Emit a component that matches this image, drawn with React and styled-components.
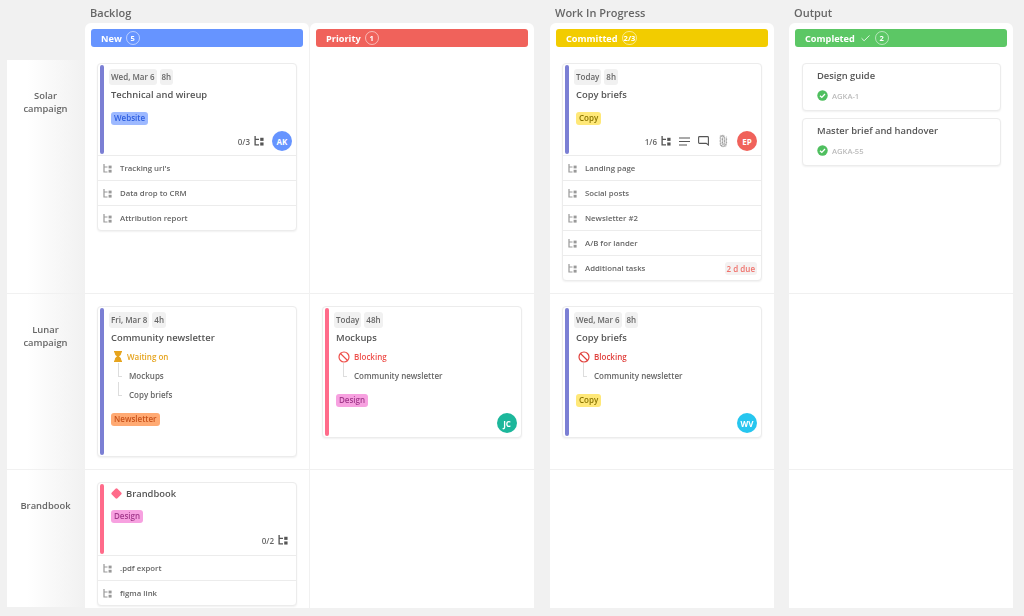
import React from 'react'
import styled, { createGlobalStyle } from 'styled-components'
import { Ban, Check, Paperclip } from 'lucide-react'

const GlobalStyle = createGlobalStyle`
    html, body {
        margin: 0;
        padding: 0;
        background: #f1f1f1;
    }
    body {
        font-family: "Open Sans", "Noto Sans", sans-serif;
        color: #555;
    }
`

const Board = styled.div`
    display: grid;
    grid-template-columns: 78px 225px 224px 16px 224px 15px 224px;
    grid-template-rows: 23px 37px 234px 176px 138px;
    padding-left: 7px;
    width: 1017px;
    height: 616px;
    box-sizing: border-box;
    filter: blur(0.3px);
`

const GroupTitle = styled.div`
    grid-row: 1;
    grid-column: ${(props) => props.$col};
    padding-left: 5px;
    font-size: 11px;
    font-weight: 600;
    line-height: 26px;
    color: #666;
    white-space: nowrap;
`

const HeaderCell = styled.div`
    grid-row: 2;
    grid-column: ${(props) => props.$col};
    background: #fff;
    border-radius: 6px 6px 0 0;
    padding: 6px 6px 0;
    ${(props) => props.$divider && 'border-right: 1px solid #f1f1f1;'}
`

const HeaderBar = styled.div`
    display: flex;
    align-items: center;
    height: 18px;
    padding-left: 10px;
    border-radius: 3px;
    background: ${(props) => props.$color};
    color: #fff;
    font-size: 9.2px;
    font-weight: 700;
`

const CountBadge = styled.span`
    display: inline-flex;
    align-items: center;
    justify-content: center;
    min-width: 10px;
    height: 12px;
    padding: 0 1px;
    margin-left: 4px;
    border: 1px solid rgba(255, 255, 255, 0.55);
    border-radius: 7px;
    font-size: 7.5px;
    font-weight: 700;
`

const RowLabel = styled.div`
    grid-row: ${(props) => props.$row};
    grid-column: 1;
    background: linear-gradient(90deg, #fff 25%, #f1f1f1 100%);
    border-bottom: 1px solid #f1f1f1;
    padding-top: ${(props) => props.$top}px;
    padding-right: 1px;
    text-align: center;
    font-size: 9.4px;
    font-weight: 600;
    line-height: 13px;
    color: #666;
    box-sizing: border-box;
`

const Cell = styled.div`
    grid-row: ${(props) => props.$row};
    grid-column: ${(props) => props.$col};
    background: #fff;
    padding: ${(props) => props.$top}px 0 0 ${(props) => props.$left || 12}px;
    box-sizing: border-box;
    border-bottom: ${(props) => (props.$row === 5 ? 0 : '1px solid #f0f0f0')};
    ${(props) => props.$divider && 'border-right: 1px solid #f1f1f1;'}
`

const Card = styled.div`
    width: ${(props) => props.$width || 200}px;
    box-sizing: border-box;
    background: #fff;
    border: 1px solid #ececec;
    border-radius: 4px;
    box-shadow: 0 1px 2px rgba(0, 0, 0, 0.06);
    margin-bottom: 7px;
`

const Main = styled.div`
    display: flex;
    min-height: ${(props) => props.$height}px;
    box-sizing: border-box;
    padding: 1px 4px 1px 2px;
`

const Bar = styled.div`
    flex: none;
    width: 4px;
    border-radius: 2px;
    background: ${(props) => props.$color};
`

const Body = styled.div`
    flex: 1;
    display: flex;
    flex-direction: column;
    padding: ${(props) => props.$top ?? 4}px 0 0 5px;
`

const Chips = styled.div`
    display: flex;
    gap: 3px;
`

const Chip = styled.span`
    height: 16px;
    line-height: 15px;
    padding: 0 2px;
    border-radius: 3px;
    background: #f1f1f1;
    color: #666;
    font-size: 8px;
    font-weight: 600;
    white-space: nowrap;
`

const Title = styled.div`
    display: flex;
    align-items: center;
    gap: 4px;
    height: 19px;
    padding-left: 2px;
    font-size: 9.4px;
    font-weight: 600;
    color: #555;
    white-space: nowrap;
`

const Tag = styled.span`
    align-self: flex-start;
    height: 13px;
    line-height: 12px;
    margin: ${(props) => props.$top || 9}px 0 0 2px;
    padding: 0 3px;
    border-radius: 3px;
    background: ${(props) => props.$bg};
    color: ${(props) => props.$color};
    font-size: 8px;
    font-weight: 600;
`

const Footer = styled.div`
    display: flex;
    align-items: center;
    justify-content: flex-end;
    gap: 8px;
    height: 20px;
    margin-top: auto;
    margin-right: ${(props) => props.$right || 0}px;
    margin-bottom: ${(props) => props.$bottom ?? 3}px;
    color: #666;
    font-size: 8px;
    font-weight: 600;
`

const Counter = styled.span`
    display: inline-flex;
    align-items: center;
    gap: 4px;
`

const Avatar = styled.span`
    display: inline-flex;
    align-items: center;
    justify-content: center;
    width: 20px;
    height: 20px;
    border-radius: 50%;
    background: ${(props) => props.$color};
    color: #fff;
    font-size: 8px;
    font-weight: 700;
`

const SubRow = styled.div`
    display: flex;
    align-items: center;
    height: 24px;
    padding: 0 4px 0 5px;
    border-top: 1px solid #ececec;
    font-size: 7.8px;
    font-weight: 600;
    color: #666;
`

const SubText = styled.span`
    flex: 1;
    margin-left: 8px;
`

const DueChip = styled.span`
    padding: 0 2px;
    height: 13px;
    line-height: 13px;
    border-radius: 3px;
    background: #f4f1f1;
    color: #f0716b;
    font-size: 8px;
    font-weight: 600;
`

const Status = styled.div`
    display: flex;
    align-items: center;
    gap: 4px;
    height: 19px;
    padding-left: 4px;
    font-size: 8px;
    font-weight: 600;
    color: ${(props) => props.$color};
`

const LinkRow = styled.div`
    display: flex;
    align-items: flex-start;
    height: 19px;
    line-height: 19px;
    padding-left: 9px;
    font-size: 8px;
    font-weight: 600;
    color: #666;
`

const Elbow = styled.span`
    flex: none;
    width: 3px;
    height: 13px;
    margin: -3px 7px 0 0;
    border-left: 1px solid #ddd;
    border-bottom: 1px solid #ddd;
`

const DoneCard = styled(Card)`
    height: 48px;
    padding: 5px 0 0 14px;
`

const DoneTitle = styled.div`
    font-size: 9.4px;
    font-weight: 600;
    line-height: 13px;
    color: #555;
`

const DoneKey = styled.div`
    display: flex;
    align-items: center;
    gap: 4px;
    margin-top: 8px;
    font-size: 7.6px;
    font-weight: 600;
    color: #bbb;
`

const UprightClip = styled(Paperclip)`
    transform: rotate(-45deg);
`

const BLUE = '#7b7fd4'
const PINK = '#ff6b8a'
const TAGS = {
    website: { $bg: '#9db9ff', $color: '#2f5fe0' },
    copy: { $bg: '#ffe878', $color: '#8a7400' },
    newsletter: { $bg: '#ffaa73', $color: '#c9521a' },
    design: { $bg: '#f7a1e0', $color: '#a33a8c' },
}

const SubtaskIcon = ({ color, size = 9 }) => (
    <svg width={size} height={size} viewBox="0 0 9 9" fill="none">
        <path d="M1 0V8H4.5M1 3H4.5" stroke={color} strokeWidth="1.2" />
        <rect x="5.6" y="1.6" width="3" height="2.8" fill={color} />
        <rect x="5.6" y="5.8" width="3" height="2.8" fill={color} />
    </svg>
)

const NotesIcon = () => (
    <svg width="11" height="9" viewBox="0 0 11 9" fill="none" stroke="#555" strokeWidth="1.1">
        <path d="M0 1H11M0 4.5H11M0 8H8" />
    </svg>
)

const CommentIcon = () => (
    <svg width="11" height="10" viewBox="0 0 11 10" fill="none" stroke="#555" strokeWidth="1.1">
        <path d="M1.5 0.6H9.5C10 0.6 10.4 1 10.4 1.5V9L8.2 7.4H1.5C1 7.4 0.6 7 0.6 6.5V1.5C0.6 1 1 0.6 1.5 0.6Z" />
    </svg>
)

const HourglassIcon = () => (
    <svg width="10" height="11" viewBox="0 0 10 11" fill="#e6a41e">
        <path d="M1 0H9V1.4H8.2V2.6C8.2 3.8 7 4.8 6 5.5C7 6.2 8.2 7.2 8.2 8.4V9.6H9V11H1V9.6H1.8V8.4C1.8 7.2 3 6.2 4 5.5C3 4.8 1.8 3.8 1.8 2.6V1.4H1Z" />
    </svg>
)

const DiamondIcon = () => (
    <svg width="11" height="11" viewBox="0 0 11 11" fill={PINK}>
        <rect x="1.5" y="1.5" width="8" height="8" rx="1.4" transform="rotate(45 5.5 5.5)" />
    </svg>
)

const DoneIcon = () => (
    <svg width="11" height="11" viewBox="0 0 11 11">
        <circle cx="5.5" cy="5.5" r="5.2" fill="#4fbf5f" />
        <path d="M3 5.7L4.8 7.4L8 4" fill="none" stroke="#fff" strokeWidth="1.3" />
    </svg>
)

const Subtasks = ({ items }) =>
    items.map((item) => (
        <SubRow key={item.text}>
            <SubtaskIcon color="#999" />
            <SubText>{item.text}</SubText>
            {item.due && <DueChip>{item.due}</DueChip>}
        </SubRow>
    ))

const Links = ({ items }) =>
    items.map((text) => (
        <LinkRow key={text}>
            <Elbow />
            {text}
        </LinkRow>
    ))

const Blocking = ({ color }) => (
    <Status $color={color}>
        <Ban size={12} color={color} strokeWidth={2.4} />
        Blocking
    </Status>
)

const App = () => (
    <>
        <GlobalStyle />
        <Board>
            <GroupTitle $col={2}>Backlog</GroupTitle>
            <GroupTitle $col={5}>Work In Progress</GroupTitle>
            <GroupTitle $col={7}>Output</GroupTitle>

            <HeaderCell $col={2} $divider>
                <HeaderBar $color="#6694ff">
                    New<CountBadge>5</CountBadge>
                </HeaderBar>
            </HeaderCell>
            <HeaderCell $col={3}>
                <HeaderBar $color="#f0625b">
                    Priority<CountBadge>1</CountBadge>
                </HeaderBar>
            </HeaderCell>
            <HeaderCell $col={5}>
                <HeaderBar $color="#f2cc00">
                    Committed<CountBadge>2/3</CountBadge>
                </HeaderBar>
            </HeaderCell>
            <HeaderCell $col={7}>
                <HeaderBar $color="#5cc765">
                    Completed&nbsp;&nbsp;
                    <Check size={11} strokeWidth={1.8} />
                    <CountBadge>2</CountBadge>
                </HeaderBar>
            </HeaderCell>

            <RowLabel $row={3} $top={29}>
                Solar
                <br />
                campaign
            </RowLabel>
            <RowLabel $row={4} $top={29}>
                Lunar
                <br />
                campaign
            </RowLabel>
            <RowLabel $row={5} $top={29}>
                Brandbook
            </RowLabel>

            <Cell $row={3} $col={2} $top={3} $divider>
                <Card>
                    <Main $height={91}>
                        <Bar $color={BLUE} />
                        <Body>
                            <Chips>
                                <Chip>Wed, Mar 6</Chip>
                                <Chip>8h</Chip>
                            </Chips>
                            <Title>Technical and wireup</Title>
                            <Tag {...TAGS.website} $top={8}>
                                Website
                            </Tag>
                            <Footer>
                                <Counter>
                                    0/3 <SubtaskIcon color="#555" size={10} />
                                </Counter>
                                <Avatar $color="#6694ff">AK</Avatar>
                            </Footer>
                        </Body>
                    </Main>
                    <Subtasks items={[{ text: "Tracking url's" }, { text: 'Data drop to CRM' }, { text: 'Attribution report' }]} />
                </Card>
            </Cell>
            <Cell $row={3} $col={3} $top={3} />
            <Cell $row={3} $col={5} $top={3}>
                <Card>
                    <Main $height={91}>
                        <Bar $color={BLUE} />
                        <Body>
                            <Chips>
                                <Chip>Today</Chip>
                                <Chip>8h</Chip>
                            </Chips>
                            <Title>Copy briefs</Title>
                            <Tag {...TAGS.copy} $top={8}>
                                Copy
                            </Tag>
                            <Footer>
                                <Counter>
                                    1/6 <SubtaskIcon color="#555" size={10} />
                                </Counter>
                                <NotesIcon />
                                <CommentIcon />
                                <UprightClip size={12} color="#777" />
                                <Avatar $color="#f0625b">EP</Avatar>
                            </Footer>
                        </Body>
                    </Main>
                    <Subtasks
                        items={[
                            { text: 'Landing page' },
                            { text: 'Social posts' },
                            { text: 'Newsletter #2' },
                            { text: 'A/B for lander' },
                            { text: 'Additional tasks', due: '2 d due' },
                        ]}
                    />
                </Card>
            </Cell>
            <Cell $row={3} $col={7} $top={3} $left={13}>
                <DoneCard $width={199}>
                    <DoneTitle>Design guide</DoneTitle>
                    <DoneKey>
                        <DoneIcon />
                        AGKA-1
                    </DoneKey>
                </DoneCard>
                <DoneCard $width={199}>
                    <DoneTitle>Master brief and handover</DoneTitle>
                    <DoneKey>
                        <DoneIcon />
                        AGKA-55
                    </DoneKey>
                </DoneCard>
            </Cell>

            <Cell $row={4} $col={2} $top={12} $divider>
                <Card>
                    <Main $height={149}>
                        <Bar $color={BLUE} />
                        <Body>
                            <Chips>
                                <Chip>Fri, Mar 8</Chip>
                                <Chip>4h</Chip>
                            </Chips>
                            <Title>Community newsletter</Title>
                            <Status $color="#e6a41e">
                                <HourglassIcon />
                                Waiting on
                            </Status>
                            <Links items={['Mockups', 'Copy briefs']} />
                            <Tag {...TAGS.newsletter}>Newsletter</Tag>
                        </Body>
                    </Main>
                </Card>
            </Cell>
            <Cell $row={4} $col={3} $top={12}>
                <Card>
                    <Main $height={130}>
                        <Bar $color={PINK} />
                        <Body>
                            <Chips>
                                <Chip>Today</Chip>
                                <Chip>48h</Chip>
                            </Chips>
                            <Title>Mockups</Title>
                            <Blocking color="#ee4f4a" />
                            <Links items={['Community newsletter']} />
                            <Tag {...TAGS.design}>Design</Tag>
                            <Footer>
                                <Avatar $color="#1cb79b">JC</Avatar>
                            </Footer>
                        </Body>
                    </Main>
                </Card>
            </Cell>
            <Cell $row={4} $col={5} $top={12}>
                <Card>
                    <Main $height={130}>
                        <Bar $color={BLUE} />
                        <Body>
                            <Chips>
                                <Chip>Wed, Mar 6</Chip>
                                <Chip>8h</Chip>
                            </Chips>
                            <Title>Copy briefs</Title>
                            <Blocking color="#e0403c" />
                            <Links items={['Community newsletter']} />
                            <Tag {...TAGS.copy}>Copy</Tag>
                            <Footer>
                                <Avatar $color="#26c6ef">WV</Avatar>
                            </Footer>
                        </Body>
                    </Main>
                </Card>
            </Cell>
            <Cell $row={4} $col={7} $top={13} />

            <Cell $row={5} $col={2} $top={12} $divider>
                <Card>
                    <Main $height={72}>
                        <Bar $color={PINK} />
                        <Body $top={0}>
                            <Title>
                                <DiamondIcon />
                                Brandbook
                            </Title>
                            <Tag {...TAGS.design} $top={7}>
                                Design
                            </Tag>
                            <Footer $right={4} $bottom={4}>
                                <Counter>
                                    0/2 <SubtaskIcon color="#555" size={10} />
                                </Counter>
                            </Footer>
                        </Body>
                    </Main>
                    <Subtasks items={[{ text: '.pdf export' }, { text: 'figma link' }]} />
                </Card>
            </Cell>
            <Cell $row={5} $col={3} $top={13} />
            <Cell $row={5} $col={5} $top={13} />
            <Cell $row={5} $col={7} $top={13} />
        </Board>
    </>
)

export default App
